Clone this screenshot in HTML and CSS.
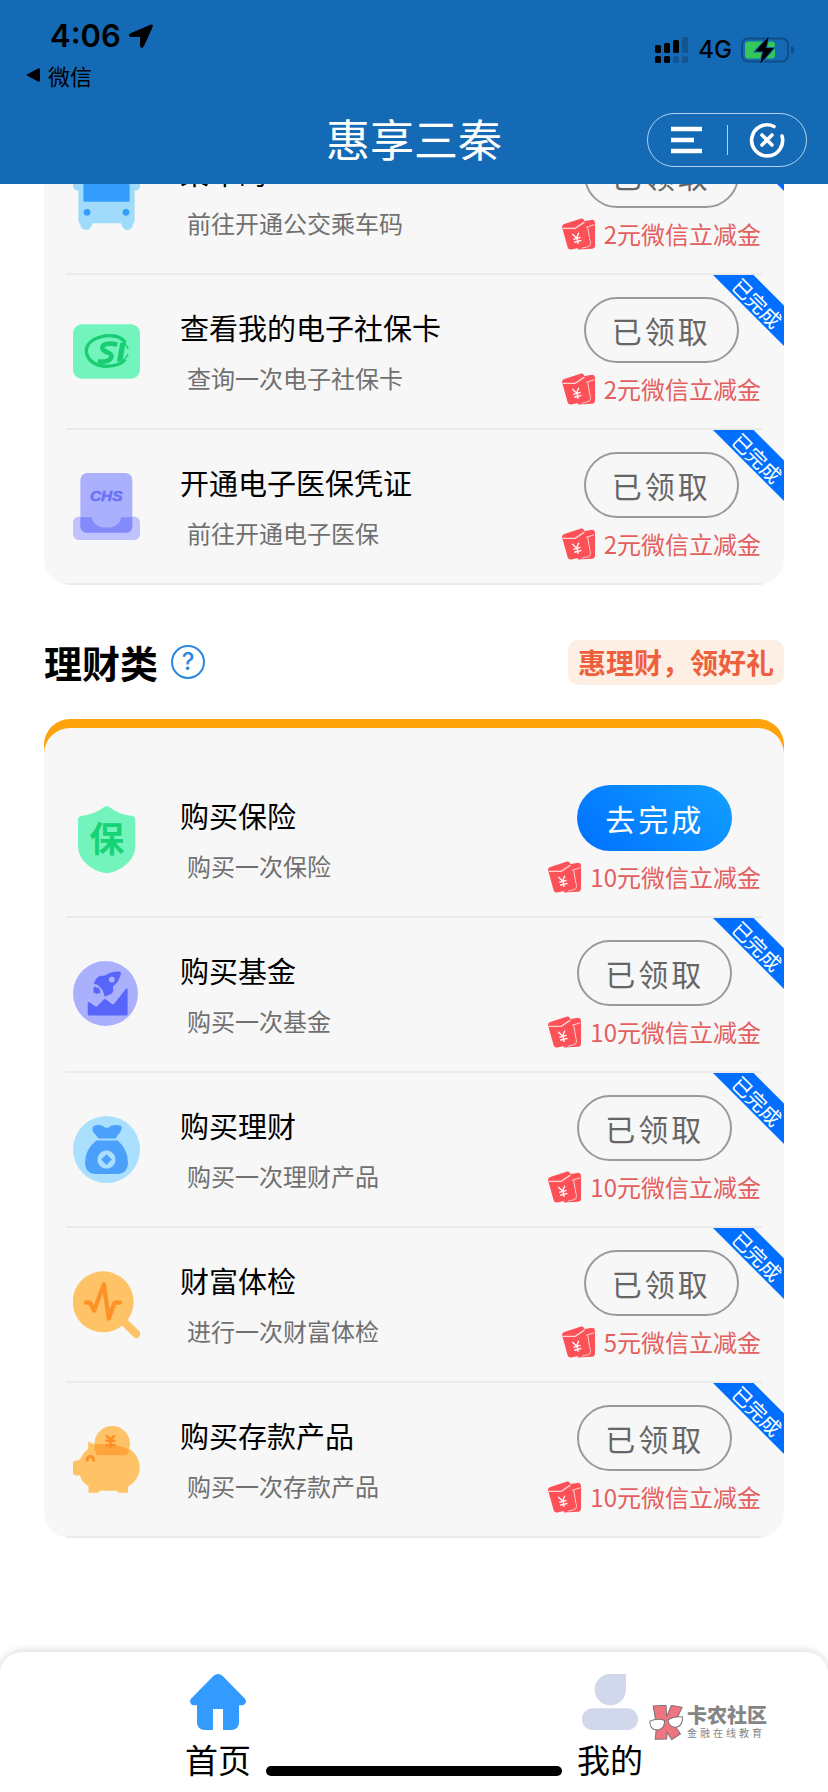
FILE: index.html
```html
<!DOCTYPE html>
<html lang="zh-CN">
<head>
<meta charset="utf-8">
<meta name="viewport" content="width=device-width, initial-scale=1">
<title>惠享三秦</title>
<link rel="stylesheet" href="styles.css">
</head>
<body>
<svg class="defs" width="0" height="0" aria-hidden="true">
  <symbol id="packet" viewBox="0 0 100 96">
    <path fill="#fd5157" d="M60 10 92 5q7 0 8 8V84q-1 8-8 9L48 95z"/>
    <path fill="none" stroke="#fbd5d6" stroke-width="3" d="M72 28 98 20M78 28 86 76q1 9-9 11L60 91"/>
    <path fill="#fd5157" d="M7 18 58 1q7-1 9 5L84 72q2 9-7 12L28 95q-9 1-11-7L0 27q0-7 7-9z"/>
    <path fill="none" stroke="#fbd5d6" stroke-width="4" d="M2 31 40 31 68 12"/>
    <path fill="none" stroke="#fff" stroke-width="4" d="M31 48 44 60 51 44M45 59 49 78M34 64 56 58M37 73 59 67"/>
  </symbol>
</svg>

<div class="page">
  <header class="header">
    <div class="status">
      <div class="status-left">
        <div class="clock">4:06
          <svg width="24" height="24" viewBox="0 0 24 24" aria-hidden="true"><path d="M22 .4q2.500 0 1.700 2.400L15 22q-2.500 3.800-4 0V13H2q-4-1-.5-3.700z"/></svg>
        </div>
        <a class="back" href="#"><svg width="14" height="14" viewBox="0 0 14 14" aria-hidden="true"><path d="M0 7 12 .6q2-1 2 1v10.800q0 2-2 1z"/></svg>微信</a>
      </div>
      <div class="status-right">
        <svg width="34" height="26" viewBox="0 0 34 26" aria-hidden="true">
          <g><rect y="8" width="6" height="8" rx="1.500"/><rect x="9" y="6" width="6" height="10" rx="1.500"/><rect x="18" y="3" width="6" height="13" rx="1.500"/><rect y="19" width="6" height="7" rx="1.500"/><rect x="9" y="19" width="6" height="7" rx="1.500"/></g>
          <g fill="#115691"><rect x="27" y="0" width="6" height="16" rx="1.500"/><rect x="18" y="19" width="6" height="7" rx="1.500"/><rect x="27" y="19" width="6" height="7" rx="1.500"/></g>
        </svg>
        <span class="network">4G</span>
        <svg width="54" height="26" viewBox="0 0 54 26" aria-hidden="true">
          <rect x="1" y="1.500" width="46" height="23" rx="6" fill="none" stroke="#0f4d84" stroke-width="2"/>
          <path d="M50 9q3 1 3 4t-3 4z" fill="#0f4d84"/>
          <rect x="4" y="4.500" width="30" height="17" rx="3" fill="#35c759"/>
          <path d="M28-1 14 14.500h8L19 27 33 11h-8L28-1z" stroke="#156ab5" stroke-width="2" paint-order="stroke"/>
        </svg>
      </div>
    </div>
    <div class="titlebar">
      <h1>惠享三秦</h1>
      <div class="capsule">
        <button aria-label="菜单"><svg width="32" height="28" viewBox="0 0 32 28" aria-hidden="true"><path d="M0 3h31M0 14h23M0 25h31" stroke="#fff" stroke-width="4.600"/></svg></button>
        <button aria-label="关闭"><svg width="36" height="36" viewBox="0 0 36 36" fill="none" stroke="#fff" stroke-width="3.600" stroke-linecap="round" aria-hidden="true"><path d="M25 4.500A15.500 15.500 0 1 0 33 14"/><path d="M13 13 23 23M23 13 13 23"/></svg></button>
      </div>
    </div>
  </header>

  <main class="content">
    <ul class="card card-scrolled">
      <li class="task">
        <svg class="icon" viewBox="0 0 200 200" aria-hidden="true">
          <path fill="#a0dbfb" d="M0 20h200v50q-4 14-16 12v88q0 9-6 12v6q-4 12-17 12t-18-20H58q-5 20-18 20t-18-12v-6q-6-3-6-12V82Q4 84 0 70z"/>
          <path fill="#339cfc" d="M31 20h138v92q0 4-4 4H35q-4 0-4-4z"/>
          <circle cx="42" cy="147" r="10" fill="#339cfc"/><circle cx="158" cy="147" r="10" fill="#339cfc"/>
        </svg>
        <div class="info"><h3>乘车码</h3><p>前往开通公交乘车码</p></div>
        <div class="action"><button class="btn">已领取</button><div class="reward"><svg aria-hidden="true"><use href="#packet"/></svg>2元微信立减金</div></div>
        <div class="ribbon"><span>已完成</span></div>
      </li>
      <li class="task">
        <svg class="icon" viewBox="0 0 200 200" aria-hidden="true">
          <rect y="19" width="200" height="162" rx="26" fill="#74f4bd"/>
          <path fill="none" stroke="#18cd72" stroke-width="10" d="M156 74C142 50 104 50 84 56C50 64 38 84 40 102C44 130 72 144 100 144C126 144 146 136 156 124"/>
          <path fill="none" stroke="#18cd72" stroke-width="14" d="M132 80C108 72 84 78 88 92C92 104 120 102 114 118C110 130 90 132 74 129"/>
          <path fill="#18cd72" d="M141 74h16l-10 56h-16z"/>
          <path fill="none" stroke="#18cd72" stroke-width="4" d="M154 74 165 92M165 109 152 126"/>
        </svg>
        <div class="info"><h3>查看我的电子社保卡</h3><p>查询一次电子社保卡</p></div>
        <div class="action"><button class="btn">已领取</button><div class="reward"><svg aria-hidden="true"><use href="#packet"/></svg>2元微信立减金</div></div>
        <div class="ribbon"><span>已完成</span></div>
      </li>
      <li class="task">
        <svg class="icon" viewBox="0 0 200 200" aria-hidden="true">
          <rect y="130" width="200" height="70" rx="18" fill="#c0c3fd"/>
          <rect x="22" width="155" height="178" rx="20" fill="#abb0fd"/>
          <path fill="#838afa" d="M22 132h34q6 31 44 31t44-31h33v26q0 20-20 20H42q-20 0-20-20z"/>
          <text x="99" y="84" text-anchor="middle" class="mark mark-chs">CHS</text>
        </svg>
        <div class="info"><h3>开通电子医保凭证</h3><p>前往开通电子医保</p></div>
        <div class="action"><button class="btn">已领取</button><div class="reward"><svg aria-hidden="true"><use href="#packet"/></svg>2元微信立减金</div></div>
        <div class="ribbon"><span>已完成</span></div>
      </li>
    </ul>

    <div class="section-head">
      <h2>理财类</h2>
      <button class="help" aria-label="帮助">?</button>
      <span class="tag">惠理财，领好礼</span>
    </div>

    <ul class="card card-accent">
      <li class="task">
        <svg class="icon" viewBox="0 0 200 200" aria-hidden="true">
          <path fill="#74f4bd" d="M93 3q8-5 16 0Q132 24 178 30q8 2 8 10v78c0 50-50 78-85 83C65 196 15 168 15 118V40q0-8 8-10Q68 24 93 3z"/>
          <text x="101" y="138" text-anchor="middle" class="mark mark-bao">保</text>
        </svg>
        <div class="info"><h3>购买保险</h3><p>购买一次保险</p></div>
        <div class="action"><button class="btn btn-go">去完成</button><div class="reward"><svg aria-hidden="true"><use href="#packet"/></svg>10元微信立减金</div></div>
      </li>
      <li class="task">
        <svg class="icon" viewBox="0 0 200 200" aria-hidden="true">
          <circle cx="97" cy="97" r="97" fill="#abb0fd"/>
          <g fill="#5865fb">
            <path d="M44 126q0-5 5-3l18 13q3 1 6-2l19-19q3-3 7 0l17 13q4 3 8-2l33-42q6-6 6 2v72q0 5-5 5H49q-5 0-5-5z"/>
            <path fill-rule="evenodd" d="M138 31q6 0 5 6Q139 60 119 76q5 20-11 25l-14 5Q92 88 79 76 70 68 62 69 66 50 82 44l12 0Q112 31 138 31zM116 46a9 9 0 1 0 .1 0z"/>
            <path d="M66 75q4 6 10 5 6 8 6 14-4 5-7 1-6 8-9-1-9 4-4-6-4-6 4-13z"/>
          </g>
        </svg>
        <div class="info"><h3>购买基金</h3><p>购买一次基金</p></div>
        <div class="action"><button class="btn">已领取</button><div class="reward"><svg aria-hidden="true"><use href="#packet"/></svg>10元微信立减金</div></div>
        <div class="ribbon"><span>已完成</span></div>
      </li>
      <li class="task">
        <svg class="icon" viewBox="0 0 200 200" aria-hidden="true">
          <circle cx="100" cy="100" r="100" fill="#aadffd"/>
          <path fill="#4aa0fb" d="M76 67q-6-8-14-17-8-12 0-20 12-5 26-1 6 7 13 6 7 1 12-6 16-5 30 0 6 9-3 20-8 9-12 18z"/>
          <path fill="#4aa0fb" fill-rule="evenodd" d="M70 73h63q31 26 31 65 0 35-33 35H69q-33 0-33-35 0-39 34-65zM100 103a27 27 0 1 0 .1 0z"/>
          <path fill="#4aa0fb" d="M100 114 116 130 100 146 84 130z"/>
        </svg>
        <div class="info"><h3>购买理财</h3><p>购买一次理财产品</p></div>
        <div class="action"><button class="btn">已领取</button><div class="reward"><svg aria-hidden="true"><use href="#packet"/></svg>10元微信立减金</div></div>
        <div class="ribbon"><span>已完成</span></div>
      </li>
      <li class="task">
        <svg class="icon" viewBox="0 0 200 200" aria-hidden="true">
          <circle cx="90" cy="92" r="91" fill="#fdc366"/>
          <path stroke="#fdc366" stroke-width="24" stroke-linecap="round" d="M150 150 189 188"/>
          <path fill="none" stroke="#fd9328" stroke-width="13" stroke-linecap="round" stroke-linejoin="round" d="M39 94h6q7 0 9 7l9 17L92 40l15 102 15-42q2-6 8-6h10"/>
        </svg>
        <div class="info"><h3>财富体检</h3><p>进行一次财富体检</p></div>
        <div class="action"><button class="btn">已领取</button><div class="reward"><svg aria-hidden="true"><use href="#packet"/></svg>5元微信立减金</div></div>
        <div class="ribbon"><span>已完成</span></div>
      </li>
      <li class="task">
        <svg class="icon" viewBox="0 0 200 200" aria-hidden="true">
          <circle cx="117" cy="53" r="53" fill="#fdc366"/>
          <path fill="#fdc366" d="M46 46 70 58Q90 53 120 54C170 56 199 88 199 124 199 150 185 169 164 181V196q0 3-3 3H137q-5 0-5-6H79q0 6-5 6H49q-3 0-3-3V180Q26 168 21 148H10Q0 146 0 138V112q0-9 10-9 10 0 14-8 8-17 21-26z"/>
          <path fill="#fda43c" d="M64 55q54-5 101 14 4 12-6 18H72q-8-10-8-32z"/>
          <path fill="none" stroke="#fd8e25" stroke-width="8" d="M99 28 112 40 125 28M97 44h30M97 58h30M112 40v25"/>
          <path fill="none" stroke="#fd9328" stroke-width="9" stroke-linecap="round" d="M42 102c0-15 20-15 20 0"/>
        </svg>
        <div class="info"><h3>购买存款产品</h3><p>购买一次存款产品</p></div>
        <div class="action"><button class="btn">已领取</button><div class="reward"><svg aria-hidden="true"><use href="#packet"/></svg>10元微信立减金</div></div>
        <div class="ribbon"><span>已完成</span></div>
      </li>
    </ul>
  </main>

  <nav class="tabs">
    <a class="tab" href="#">
      <svg viewBox="0 0 168 168" aria-hidden="true"><path fill="#349bfe" d="M70 6q14-12 28 0l67 68q6 8 0 16-3 4-9 4h-9v54q-3 20-22 20H99V105H69v63H43q-19 0-22-20V94h-9q-6 0-9-4-6-8 0-16z"/></svg>
      首页
    </a>
    <a class="tab" href="#">
      <svg viewBox="0 0 168 168" fill="#d1d8eb" aria-hidden="true"><path d="M84 0h48v46a47 47 0 1 1-48-46z"/><rect y="103" width="168" height="65" rx="32"/></svg>
      我的
    </a>
    <div class="home-bar"></div>
    <div class="watermark">
      <svg viewBox="0 0 100 104" aria-hidden="true">
        <g fill="#ee7580" stroke="#7b7273" stroke-width="3"><path d="M12 3 50 1l2 34L66 1l32 6-18 38-5 15 18 26-26 17-14-22-1 20-34 1 4-40z"/></g>
        <g fill="#fff" stroke="#7b7273" stroke-width="3"><path d="M2 48q22-10 44-2 0 28-22 28T2 48z"/><path d="M56 44q20-12 44-8-2 30-22 30T56 44z"/></g>
      </svg>
      <div class="watermark-text"><strong>卡农社区</strong><small>金融在线教育</small></div>
    </div>
  </nav>
</div>
</body>
</html>
```
FILE: styles.css
```css
* { box-sizing: border-box; }

body {
  margin: 0;
  background: #fff;
  color: #000;
  font-family: "Noto Sans CJK SC", sans-serif;
}

h1, h2, h3, p, ul { margin: 0; padding: 0; font-weight: 400; }
ul { list-style: none; }
a { color: inherit; text-decoration: none; }
button { font: inherit; padding: 0; border: 0; background: none; }
.defs { position: absolute; }

.page {
  display: flex;
  flex-direction: column;
  min-height: 100vh;
}

/* Header */
.header {
  height: 184px;
  background: #156ab5;
  color: #fff;
}

.status {
  display: flex;
  justify-content: space-between;
  height: 98px;
  padding: 20px 33px 0 26px;
  color: #000;
}

.clock {
  display: flex;
  align-items: center;
  gap: 8px;
  padding-left: 24px;
  font: 600 31px/32px Inter, sans-serif;
}

.back {
  display: flex;
  align-items: center;
  gap: 8px;
  margin-top: 7px;
  font-size: 22px;
  line-height: 32px;
}

.status-right {
  display: flex;
  align-items: center;
  gap: 9px;
  height: 60px;
}

.network { font: 500 24px/24px Inter, sans-serif; }

.titlebar {
  display: grid;
  grid-template-columns: 1fr auto 1fr;
  align-items: center;
  height: 84px;
  padding: 0 21px;
}

h1 {
  grid-column: 2;
  padding-bottom: 4px;
  font-size: 44px;
  line-height: 56px;
}

.capsule {
  justify-self: end;
  display: flex;
  align-items: center;
  width: 160px;
  height: 54px;
  border: 1px solid #b4d0ea;
  border-radius: 27px;
}

.capsule button {
  flex: 1;
  display: flex;
  align-items: center;
  justify-content: center;
  height: 30px;
}

.capsule button + button { border-left: 1px solid #b4d0ea; }

/* Task lists */
.content {
  flex: 1;
  padding: 0 44px 112px;
  overflow: hidden;
}

.card {
  background: #f7f7f7;
  border-radius: 26px;
  overflow: hidden;
}

.card-scrolled { margin-top: -64px; }

.card-accent {
  padding-top: 44px;
  box-shadow: inset 0 9px 0 #fea30b;
}

.task {
  position: relative;
  display: flex;
  align-items: center;
  height: 155px;
  margin: 0 22px;
  padding: 0 1px 0 7px;
  border-bottom: 2px solid #ebebeb;
}

.icon {
  flex: none;
  width: 67px;
  height: 67px;
}

.mark { font-family: "Noto Sans CJK SC", sans-serif; font-weight: 700; }
.mark-chs { fill: #6b73f8; stroke: #6b73f8; stroke-width: 2px; font-family: "Liberation Sans", sans-serif; font-size: 46px; font-style: italic; }
.mark-bao { fill: #18d276; font-size: 104px; }

.info { flex: 1; margin-left: 40px; }

.info h3 {
  font-size: 29px;
  line-height: 38px;
}

.info p {
  margin: 14px 0 0 7px;
  color: #707070;
  font-size: 24px;
  line-height: 36px;
}

.action {
  display: flex;
  flex-direction: column;
  align-items: center;
  gap: 8px;
}

.btn {
  width: 155px;
  height: 66px;
  border: 2px solid #9a9a9a;
  border-radius: 33px;
  color: #666;
  font-size: 30px;
  line-height: 40px;
  letter-spacing: 3px;
}

.btn-go {
  border: 0;
  background: linear-gradient(45deg, #0070ff, #12a0ff);
  color: #fff;
}

.reward {
  display: flex;
  align-items: center;
  gap: 9px;
  color: #e45f5f;
  font-size: 24px;
  line-height: 36px;
}

.reward svg { width: 33px; height: 32px; }

.ribbon {
  position: absolute;
  top: 0;
  right: -22px;
  display: grid;
  place-content: center;
  width: 71px;
  height: 71px;
  padding: 0 0 15px 17px;
  background: #006fff;
  clip-path: polygon(0 0, 57% 0, 100% 43%, 100% 100%);
  color: #fff;
  font-size: 20px;
  line-height: 28px;
  white-space: nowrap;
}

.ribbon span { transform: rotate(45deg); }

/* Section heading */
.section-head {
  display: flex;
  align-items: center;
  height: 134px;
  padding-top: 20px;
}

h2 {
  font-size: 38px;
  font-weight: 700;
  line-height: 56px;
}

.help {
  width: 34px;
  height: 34px;
  margin-left: 13px;
  border: 2px solid #2b87dd;
  border-radius: 50%;
  color: #2b87dd;
  font: 500 24px/30px Inter, sans-serif;
}

.tag {
  margin-left: auto;
  padding: 0 10px;
  border-radius: 10px;
  background: #feefe4;
  color: #ee603d;
  font-size: 28px;
  font-weight: 700;
  line-height: 45px;
}

/* Bottom tabs */
.tabs {
  position: relative;
  display: flex;
  height: 140px;
  padding: 22px 22px 0;
  border-radius: 22px 22px 0 0;
  background: #fff;
  box-shadow: 0 -1px 8px rgba(0, 0, 0, .16);
}

.tab {
  flex: 1;
  display: flex;
  flex-direction: column;
  align-items: center;
  gap: 6px;
  font-size: 33px;
  line-height: 46px;
}

.tab svg { width: 56px; height: 56px; }

.home-bar {
  position: absolute;
  bottom: 16px;
  left: 50%;
  width: 296px;
  height: 10px;
  margin-left: -148px;
  border-radius: 5px;
  background: #000;
}

.watermark {
  position: absolute;
  top: 52px;
  right: 61px;
  display: flex;
  align-items: center;
  gap: 4px;
  color: #858585;
}

.watermark svg { width: 34px; height: 35px; }
.watermark-text { display: flex; flex-direction: column; }
.watermark strong { font-size: 20px; font-weight: 900; line-height: 22px; }
.watermark small { font-size: 10px; line-height: 14px; letter-spacing: 3px; }
```
